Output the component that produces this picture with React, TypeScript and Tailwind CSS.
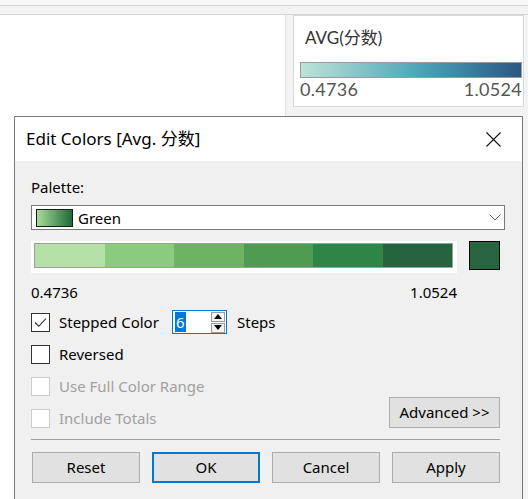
import React from "react";

const steps = ["#b4dfa7", "#8bcb7e", "#6cb462", "#4e9b52", "#2f8447", "#25643e"];

const Check = ({ checked, disabled }: { checked?: boolean; disabled?: boolean }) => (
  <div
    className={`w-[19px] h-[19px] bg-white border flex items-center justify-center ${
      disabled ? "border-[#cccccc]" : "border-[#333333]"
    }`}
  >
    {checked && (
      <svg width="13" height="11" viewBox="0 0 13 11">
        <path d="M1 5.5 L4.8 9.3 L12 1.5" fill="none" stroke="#222" strokeWidth="1.1" />
      </svg>
    )}
  </div>
);

const Btn = ({ label, primary }: { label: string; primary?: boolean }) => (
  <div
    className={`w-[108px] h-[31px] flex items-center justify-center bg-[#e1e1e1] text-black ${
      primary ? "border-2 border-[#0078d7]" : "border border-[#adadad]"
    }`}
  >
    {label}
  </div>
);

export default function App() {
  return (
    <div className="relative w-[528px] h-[499px] overflow-hidden bg-[#f3f3f3] font-['Noto_Sans','Noto_Sans_CJK_SC',sans-serif]">
      {/* top strips */}
      <div className="h-[6px] bg-[#f8f8f8] border-b border-[#d4d4d4]" />
      <div className="h-[9px] bg-[#f3f3f3] border-b border-[#d4d4d4]" />

      <div className="flex">
        {/* worksheet area */}
        <div className="w-[286px] h-[490px] bg-white border-r border-[#e2e2e2]" />

        {/* legend card */}
        <div className="ml-[7px] w-[231px] h-[92px] bg-white border border-[#d9d9d9] pl-[6px] font-['Lato','Noto_Sans_CJK_SC',sans-serif]">
          <div className="pl-[5px] pt-[11px] h-[46px] text-[17px] leading-[22px] text-[#333333]">AVG(分数)</div>
          <div className="w-[222px] h-[16px] border border-[#9a9a9a] bg-[linear-gradient(to_right,#bde3d7,#4aa3b8_55%,#2b5784)]" />
          <div className="w-[222px] flex justify-between text-[18px] leading-[22px] text-[#555555] tracking-[0.3px]">
            <span>0.4736</span>
            <span>1.0524</span>
          </div>
        </div>
      </div>

      {/* Edit Colors dialog */}
      <div className="absolute left-[14px] top-[116px] w-[509px] h-[400px] border border-[#7a7a7a] bg-[#f0f0f0] text-[15px] text-black">
        <div className="h-[44px] bg-white flex items-center justify-between pl-[11px] pr-[21px]">
          <span className="text-[17px]">Edit Colors [Avg. 分数]</span>
          <svg width="15" height="15" viewBox="0 0 15 15">
            <path d="M0.5 0.5 L14.5 14.5 M14.5 0.5 L0.5 14.5" stroke="#111" strokeWidth="1.1" />
          </svg>
        </div>

        <div className="pl-[16px] pr-[17px] pt-[16px]">
          <div className="leading-[20px]">Palette:</div>

          {/* palette dropdown */}
          <div className="mt-[8px] h-[25px] border border-[#7a7a7a] bg-white flex items-center pl-[4px] pr-[3px]">
            <div className="w-[37px] h-[18px] border border-[#1a1a1a] bg-[linear-gradient(to_right,#a9db99,#1f6a37)]" />
            <span className="ml-[5px] leading-[20px]">Green</span>
            <svg className="ml-auto" width="12" height="7" viewBox="0 0 12 7">
              <path d="M0.5 0.5 L6 6 L11.5 0.5" fill="none" stroke="#606060" strokeWidth="1" />
            </svg>
          </div>

          {/* stepped ramp */}
          <div className="mt-[11px] flex items-start">
            <div className="w-[426px] h-[32px] bg-white pt-[2px] pl-[3px] pr-[4px]">
              <div className="h-[25px] border border-[#9e9e9e] flex">
                {steps.map((c) => (
                  <div key={c} className="flex-1" style={{ background: c }} />
                ))}
              </div>
            </div>
            <div className="ml-[12px] w-[31px] h-[29px] border border-black bg-[#27643f]" />
          </div>

          <div className="mt-[9px] w-[426px] flex justify-between leading-[20px]">
            <span>0.4736</span>
            <span>1.0524</span>
          </div>

          {/* options */}
          <div className="mt-[4px] h-[32px] flex items-center">
            <Check checked />
            <span className="ml-[9px] w-[113px]">Stepped Color</span>
            <div className="w-[55px] h-[24px] border border-[#0078d7] bg-white flex items-center pl-[2px] pr-[1px]">
              <span className="h-[20px] px-[1px] bg-[#0078d7] text-white leading-[20px]">6</span>
              <div className="ml-auto flex flex-col gap-[1px]">
                <div className="w-[14px] h-[10px] border border-[#9a9a9a] bg-[#f4f4f4] flex items-center justify-center">
                  <svg width="8" height="5" viewBox="0 0 8 5">
                    <path d="M0 5 L4 0 L8 5 Z" fill="#000" />
                  </svg>
                </div>
                <div className="w-[14px] h-[10px] border border-[#9a9a9a] bg-[#f4f4f4] flex items-center justify-center">
                  <svg width="8" height="5" viewBox="0 0 8 5">
                    <path d="M0 0 L8 0 L4 5 Z" fill="#000" />
                  </svg>
                </div>
              </div>
            </div>
            <span className="ml-[10px]">Steps</span>
          </div>

          <div className="h-[32px] flex items-center">
            <Check />
            <span className="ml-[9px]">Reversed</span>
          </div>

          <div className="flex">
            <div className="flex flex-col text-[#a0a0a0]">
              <div className="h-[32px] flex items-center">
                <Check disabled />
                <span className="ml-[9px]">Use Full Color Range</span>
              </div>
              <div className="h-[32px] flex items-center">
                <Check disabled />
                <span className="ml-[9px]">Include Totals</span>
              </div>
            </div>
            <div className="ml-auto flex items-end pb-[6px] pr-[5px]">
              <div className="w-[111px] h-[31px] flex items-center justify-center bg-[#e1e1e1] border border-[#adadad]">
                Advanced &gt;&gt;
              </div>
            </div>
          </div>

          <div className="mt-[5px] w-[469px] h-[1px] bg-[#a0a0a0]" />

          <div className="mt-[12px] ml-[1px] flex gap-[12px]">
            <Btn label="Reset" />
            <Btn label="OK" primary />
            <Btn label="Cancel" />
            <Btn label="Apply" />
          </div>
        </div>
      </div>
    </div>
  );
}
